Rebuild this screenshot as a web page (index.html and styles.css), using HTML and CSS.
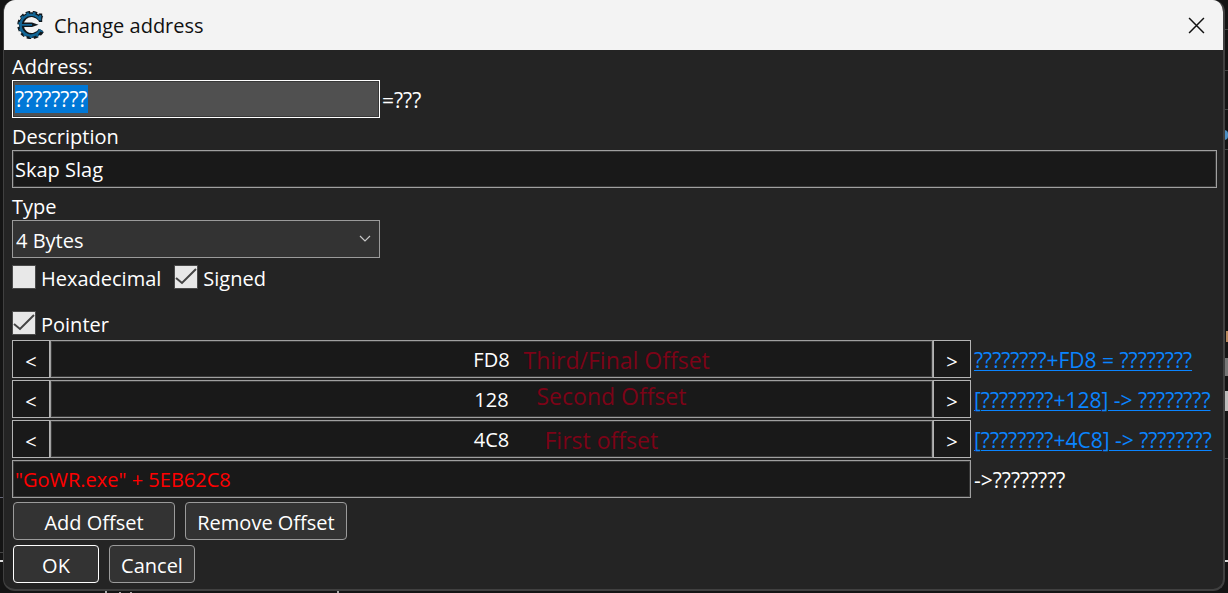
FILE: index.html
```html
<!DOCTYPE html>
<html lang="en">
<head>
<meta charset="utf-8">
<title>Change address</title>
<meta name="viewport" content="width=device-width, initial-scale=1">
<link rel="stylesheet" href="styles.css">
</head>
<body>
<div class="backdrop" aria-hidden="true">
  <i class="rule left r1"></i><i class="rule left r2"></i><i class="rule left r3 bright"></i>
  <i class="rule right r4"></i><i class="rule right r5"></i><i class="rule right r6"></i><i class="rule right r7"></i><i class="rule right r8"></i><i class="rule right r9 bright"></i>
  <i class="tick t1"></i><i class="tick t2"></i><i class="tick t3"></i><i class="tick t4"></i>
  <i class="blob b1"></i><i class="blob b2"></i><i class="blob b3"></i><i class="blob b4"></i>
</div>
<main class="window">
  <header class="titlebar">
    <svg class="logo" viewBox="0 0 28 28" aria-hidden="true">
      <g fill="none" stroke="#10171c">
        <path d="M24.6 7.2A12.2 12.2 0 1 0 25.2 19.8" stroke-width="4" stroke-dasharray="4.2 2.3"/>
        <path d="M23.6 8.6A10.4 10.4 0 1 0 24 18.8" stroke-width="4.8"/>
        <path d="M23.5 2.5V11" stroke-width="3.4"/>
      </g>
      <path d="M3 11.6H15L21.5 13.8L15 16H3Z" fill="#10171c"/>
      <g fill="none" stroke="#126696">
        <path d="M24.3 7.4A11.8 11.8 0 1 0 24.9 19.6" stroke-width="2.6" stroke-dasharray="2.4 4.1" stroke-dashoffset="-1"/>
        <path d="M23 9A10.4 10.4 0 1 0 23.4 18.6" stroke-width="2.4"/>
        <path d="M23.5 4V9.5" stroke-width="1.4"/>
        <path d="M4 13.8H15" stroke-width="1.8"/>
      </g>
    </svg>
    <h1 class="title">Change address</h1>
    <button class="close" type="button" aria-label="Close"><svg viewBox="0 0 16 16" aria-hidden="true"><path d="M1 1L15 15M15 1L1 15" fill="none" stroke="#111" stroke-width="1.4"/></svg></button>
  </header>
  <form class="content">
    <label class="label" for="address">Address:</label>
    <div class="address-row">
      <input class="field address" id="address" type="text" value="????????" autofocus>
      <output class="value" for="address">=???</output>
    </div>
    <label class="label spaced" for="description">Description</label>
    <input class="field" id="description" type="text" value="Skap Slag">
    <label class="label spaced" for="type">Type</label>
    <div class="select-wrap">
      <select class="select" id="type"><option>4 Bytes</option></select>
      <svg class="chevron" viewBox="0 0 12 7" aria-hidden="true"><path d="M1 1L6 6L11 1" fill="none" stroke="#c8c8c8" stroke-width="1.2"/></svg>
    </div>
    <div class="checks">
      <label class="check"><input type="checkbox"><span>Hexadecimal</span></label>
      <label class="check"><input type="checkbox" checked><span>Signed</span></label>
    </div>
    <div class="checks pointer">
      <label class="check"><input type="checkbox" checked><span>Pointer</span></label>
    </div>
    <div class="offsets">
      <div class="offset">
        <button class="step" type="button" aria-label="Decrease third offset">&lt;</button>
        <div class="offset-field"><input class="field" type="text" value="FD8" aria-label="Third offset"><span class="note third">Third/Final Offset</span></div>
        <button class="step" type="button" aria-label="Increase third offset">&gt;</button>
      </div>
      <a class="link" href="#third">????????+FD8 = ????????</a>
      <div class="offset">
        <button class="step" type="button" aria-label="Decrease second offset">&lt;</button>
        <div class="offset-field"><input class="field" type="text" value="128" aria-label="Second offset"><span class="note second">Second Offset</span></div>
        <button class="step" type="button" aria-label="Increase second offset">&gt;</button>
      </div>
      <a class="link" href="#second">[????????+128] -&gt; ????????</a>
      <div class="offset">
        <button class="step" type="button" aria-label="Decrease first offset">&lt;</button>
        <div class="offset-field"><input class="field" type="text" value="4C8" aria-label="First offset"><span class="note first">First offset</span></div>
        <button class="step" type="button" aria-label="Increase first offset">&gt;</button>
      </div>
      <a class="link" href="#first">[????????+4C8] -&gt; ????????</a>
      <input class="field base" type="text" value="&quot;GoWR.exe&quot; + 5EB62C8" aria-label="Base address">
      <span class="result">-&gt;????????</span>
    </div>
    <div class="buttons">
      <button class="button wide" type="button">Add Offset</button>
      <button class="button wide" type="button">Remove Offset</button>
    </div>
    <div class="buttons last">
      <button class="button default" type="submit">OK</button>
      <button class="button" type="button">Cancel</button>
    </div>
  </form>
</main>
<script src="script.js"></script>
</body>
</html>
```
FILE: script.js
```js
const address = document.getElementById("address");
address.focus();
address.select();
```
FILE: styles.css
```css
* { box-sizing: border-box; }
body {
  margin: 0;
  background: #141414;
  color: #fff;
  font: 20px/28px "Open Sans", "Noto Sans", sans-serif;
  overflow: hidden;
}
button, input, select { font: inherit; color: inherit; margin: 0; }

/* Edges of the application that lies behind the dialog */
.backdrop { position: fixed; inset: 0; }
.rule, .tick, .blob { position: absolute; background: #444; }
.rule { height: 1px; width: 6px; }
.rule.left { left: 0; }
.rule.right { right: 0; }
.rule.bright { height: 2px; background: #ddd; }
.r1 { top: 497px; background: #667; }
.r2 { top: 552px; }
.r3 { top: 560px; }
.r4 { top: 29px; }
.r5 { top: 70px; }
.r6 { top: 109px; }
.r7 { top: 149px; }
.r8 { top: 458px; }
.r9 { top: 560px; }
.tick { bottom: 0; width: 2px; height: 3px; background: #aaa; }
.t1 { left: 105px; }
.t2 { left: 337px; }
.t3 { left: 119px; height: 1px; }
.t4 { left: 130px; height: 1px; }
.blob { right: 0; width: 4px; background: #bbb; }
.b1 { top: 130px; height: 10px; border-radius: 0 4px 4px 0; background: #4d8fc4; }
.b2 { top: 358px; height: 18px; background: #777; }
.b3 { top: 391px; height: 20px; }
.b4 { top: 331px; height: 11px; width: 2px; background: #b98a5e; }

.window {
  position: relative;
  margin: 0 3px;
  border: solid #404040;
  border-width: 0 2px 2px 1px;
  border-radius: 12px;
  background: #242424;
  overflow: hidden;
}
.titlebar {
  display: flex;
  align-items: center;
  height: 50px;
  padding: 0 18px 0 13px;
  background: #f3f3f3;
  color: #111;
}
.logo { width: 28px; height: 28px; margin-right: 9px; }
.title { flex: 1; margin: 0; padding-top: 2px; font-size: 20px; font-weight: 400; }
.close { display: flex; padding: 0; border: 0; background: none; }
.close svg { width: 17px; height: 17px; }

.content { padding: 2px 6px 6px 8px; }
.label { display: block; height: 28px; padding-top: 1px; }
.label.spaced { margin-top: 4px; }
.field {
  display: block;
  width: 100%;
  height: 38px;
  padding: 0 2px;
  border: 1px solid #a0a0a0;
  border-radius: 0;
  outline: 0;
  background: #191919;
  box-shadow: inset 0 0 0 1px #383838;
}
.address-row { display: flex; align-items: center; gap: 2px; }
.address { width: 368px; border-color: #fff; background: #505050; font-size: 21px; }
.value { padding-top: 2px; font-size: 21px; }
.address::selection { background: #0078d7; color: #fff; }
.select-wrap { position: relative; width: 368px; }
.select {
  display: block;
  width: 100%;
  height: 38px;
  padding: 3px 3px 0;
  border: 1px solid #9b9b9b;
  border-radius: 0;
  appearance: none;
  background: #333;
}
.chevron { position: absolute; right: 9px; top: 15px; width: 12px; height: 7px; }

.checks { display: flex; gap: 13px; height: 28px; margin-top: 5px; }
.checks.pointer { margin: 18px 0 3px; }
.check { display: flex; align-items: center; gap: 5px; }
.check span { padding-top: 3px; }
.check input {
  width: 24px;
  height: 24px;
  border: 1px solid #4a4a4a;
  appearance: none;
  background: #e8e8e8;
}
.check input:checked {
  background: #e8e8e8 url("data:image/svg+xml,%3Csvg xmlns='http://www.w3.org/2000/svg' viewBox='0 0 22 22'%3E%3Cpath d='M1 12L7 17L21 3' fill='none' stroke='%23444' stroke-width='2'/%3E%3C/svg%3E");
}

.offsets {
  display: grid;
  grid-template-columns: 1fr 243px;
  gap: 2px 3px;
  align-items: center;
}
.offset { display: flex; }
.offset-field { position: relative; flex: 1; }
.offset-field .field { text-align: center; }
.step {
  width: 38px;
  height: 38px;
  padding: 5px 0 0;
  border: 1px solid #b4b4b4;
  background: #191919;
}
.link { padding-top: 2px; font-size: 21px; color: #0a84ff; white-space: nowrap; text-decoration-thickness: 1px; text-underline-offset: 2px; }
.result { padding-top: 2px; font-size: 21px; white-space: nowrap; }
.base { color: #f00; }
/* Remarks laid over the offset fields */
.note {
  position: absolute;
  color: #7c0317;
  font-size: 23px;
  white-space: nowrap;
  pointer-events: none;
}
.third { left: calc(50% + 32px); top: 6px; }
.second { left: calc(50% + 45px); top: 2px; }
.first { left: calc(50% + 53px); top: 6px; }

.buttons { display: flex; gap: 10px; padding: 4px 1px 0; }
.buttons.last { padding-top: 5px; }
.button {
  width: 86px;
  height: 38px;
  padding: 3px 0 0;
  border: 1px solid #9b9b9b;
  border-radius: 4px;
  background: #333;
}
.button.wide { width: 162px; }
.button.default { border-color: #fff; }
```
